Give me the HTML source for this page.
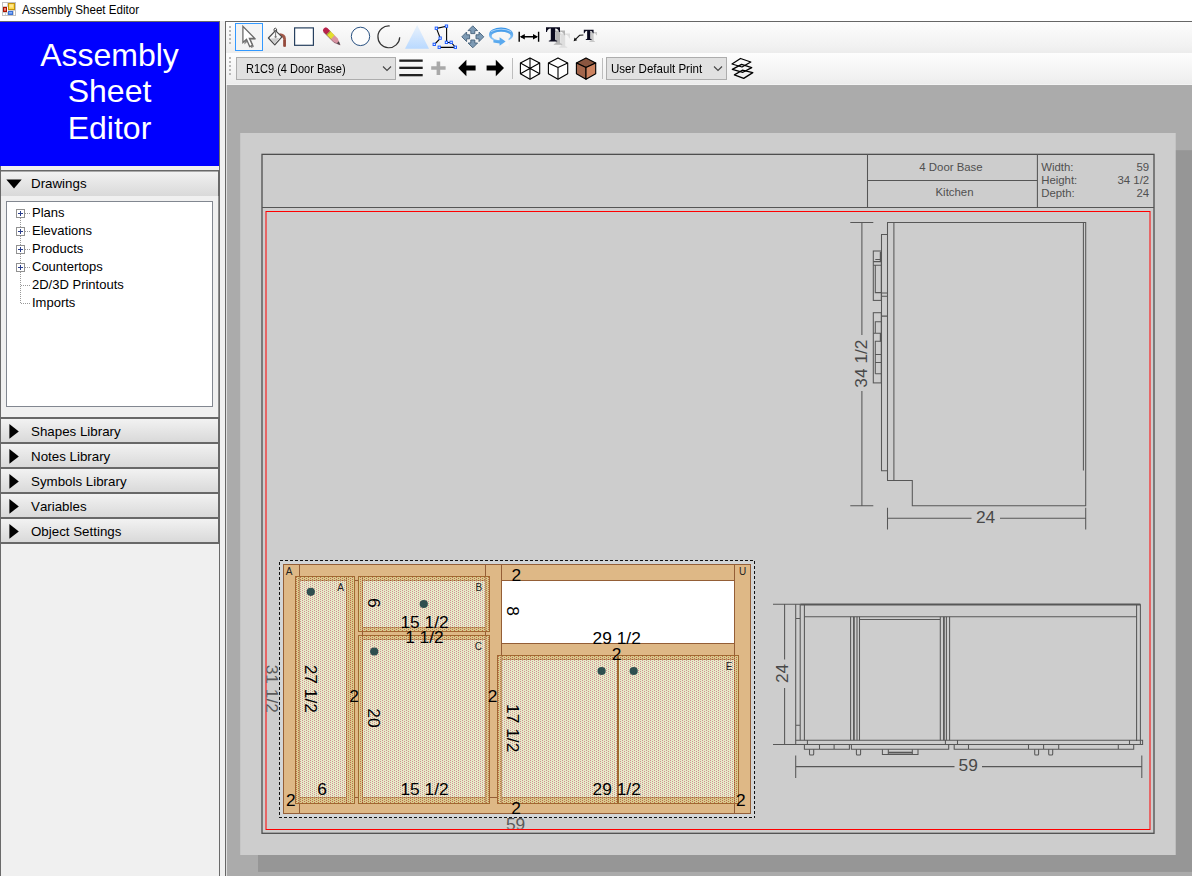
<!DOCTYPE html>
<html>
<head>
<meta charset="utf-8">
<title>Assembly Sheet Editor</title>
<style>
*{box-sizing:border-box;margin:0;padding:0}
html,body{width:1192px;height:876px;overflow:hidden;background:#fff;font-family:"Liberation Sans",sans-serif;}
.abs{position:absolute}
#title{position:absolute;left:0;top:0;width:1192px;height:21px;background:#fff}
#title span{position:absolute;left:22px;top:2px;font-size:12.2px;color:#000;white-space:nowrap;transform:translateY(0.6px) scaleX(0.949);transform-origin:0 50%}
#left{position:absolute;left:0;top:21px;width:220px;height:855px;background:#f0f0f0;border-left:1px solid #6a6a6a;border-right:1px solid #6a6a6a;border-top:1px solid #6a6a6a}
#blue{position:absolute;left:0;top:22px;width:219px;height:144px;background:#0000ff;color:#fff;text-align:center;font-size:32px;line-height:36.3px;padding-top:15px}
.hdr{position:absolute;left:0;width:220px;height:27px;border:2px solid #686868;border-left-width:1px;background:linear-gradient(#f2f2f2,#d9d9d9);font-size:13.33px;color:#000}
.hdr span{position:absolute;left:30px;top:4px;white-space:nowrap;font-kerning:none;transform:translateY(0.7px)}
.hdr svg{position:absolute;left:0;top:0}
#tree{position:absolute;left:6px;top:201px;width:207px;height:206px;background:#fff;border:1px solid #828790;font-size:13px;color:#000}
#tree div{position:absolute;left:25px;white-space:nowrap;height:18px;line-height:18px;font-kerning:none}
#split{position:absolute;left:220px;top:21px;width:5px;height:855px;background:#f0f0f0}
#main{position:absolute;left:225px;top:21px;width:967px;height:855px;background:#ababab;border-left:1px solid #666;border-top:1px solid #666}
#tb1{position:absolute;left:226px;top:22px;width:966px;height:31px;background:linear-gradient(#fdfdfd,#f1f1f1 80%,#ececec)}
#tb2{position:absolute;left:226px;top:53px;width:966px;height:32px;background:linear-gradient(#fdfdfd,#f1f1f1 80%,#ececec);border-bottom:1px solid #f3f3f3}
.combo{position:absolute;top:57px;height:23px;background:#e1e1e1;border:1px solid #adadad;font-size:11px;color:#000;line-height:22.6px;white-space:nowrap}
</style>
</head>
<body>
<div id="title"><span>Assembly Sheet Editor</span>
<svg class="abs" style="left:0;top:0" width="20" height="20" viewBox="0 0 20 20">
<rect x="2.5" y="2.5" width="13" height="13" fill="#fff" stroke="#c2c2c2"/>
<path d="M3 6.5 H8 M7.5 3 V7 M3 12.5 H8 M5.5 12 V15 M7.5 12 V15 M13.5 10 V15 M8 10.5 H15" stroke="#d0d0d0" fill="none"/>
<rect x="8.5" y="3.5" width="6" height="6" fill="#ffd84a" stroke="#c4940c"/>
<rect x="9.5" y="4.5" width="3.5" height="3" fill="#ffeea0" opacity="0.8"/>
<rect x="3.5" y="7.5" width="3" height="4" fill="#e04838" stroke="#a81400"/>
<rect x="4.3" y="8.2" width="1.4" height="2.2" fill="#f6a0a0"/>
<rect x="8" y="11" width="5" height="4" fill="#3c72d4"/>
<rect x="9" y="12" width="3" height="1.6" fill="#86b2ff"/>
</svg>
</div>

<div id="left"></div>
<div id="blue">Assembly<br>Sheet<br>Editor</div>

<div class="hdr" style="top:170px;height:26px;border-top-width:1px;border-bottom:0;box-shadow:inset 0 1px 0 #a9a9a9"><svg width="30" height="25"><path d="M5.3 8.5 L20.7 8.5 L13 17.6 Z" fill="#000"/></svg><span style="top:4px">Drawings</span></div>
<div id="tree">
<svg class="abs" style="left:0;top:0" width="30" height="120">
<g stroke="#999" stroke-width="1" stroke-dasharray="1 1" fill="none">
<path d="M13.5 16 V101"/><path d="M18 11.5 H24"/><path d="M18 29.5 H24"/><path d="M18 47.5 H24"/><path d="M18 65.5 H24"/><path d="M14 83.5 H24"/><path d="M14 101.5 H24"/>
</g>
<g fill="#fff" stroke="#919191"><rect x="9.5" y="7.5" width="8" height="8"/><rect x="9.5" y="25.5" width="8" height="8"/><rect x="9.5" y="43.5" width="8" height="8"/><rect x="9.5" y="61.5" width="8" height="8"/></g>
<g stroke="#2a3e8c" stroke-width="1"><path d="M11 11.5 H16 M13.5 9 V14"/><path d="M11 29.5 H16 M13.5 27 V32"/><path d="M11 47.5 H16 M13.5 45 V50"/><path d="M11 65.5 H16 M13.5 63 V68"/></g>
</svg>
<div style="top:2px">Plans</div>
<div style="top:20px">Elevations</div>
<div style="top:38px">Products</div>
<div style="top:56px">Countertops</div>
<div style="top:74px">2D/3D Printouts</div>
<div style="top:92px">Imports</div>
</div>

<div class="hdr" style="top:417px"><svg width="30" height="23"><path d="M8.4 5.1 L17.8 12.4 L8.4 19.7 Z" fill="#000"/></svg><span>Shapes Library</span></div>
<div class="hdr" style="top:442px"><svg width="30" height="23"><path d="M8.4 5.1 L17.8 12.4 L8.4 19.7 Z" fill="#000"/></svg><span>Notes Library</span></div>
<div class="hdr" style="top:467px"><svg width="30" height="23"><path d="M8.4 5.1 L17.8 12.4 L8.4 19.7 Z" fill="#000"/></svg><span>Symbols Library</span></div>
<div class="hdr" style="top:492px"><svg width="30" height="23"><path d="M8.4 5.1 L17.8 12.4 L8.4 19.7 Z" fill="#000"/></svg><span>Variables</span></div>
<div class="hdr" style="top:517px"><svg width="30" height="23"><path d="M8.4 5.1 L17.8 12.4 L8.4 19.7 Z" fill="#000"/></svg><span>Object Settings</span></div>

<div class="abs" style="left:218px;top:196px;width:1px;height:221px;background:#8e8e8e"></div>
<div id="split"></div>
<div id="main"></div>
<div id="tb1"></div>
<div id="tb2"></div>
<div class="abs" style="left:226px;top:85px;width:1px;height:791px;background:#dedede"></div>

<div class="combo" style="left:236px;width:160px"><span style="position:absolute;left:9px;font-size:12.6px;transform:scaleX(0.873);transform-origin:0 50%">R1C9 (4 Door Base)</span>
<svg class="abs" style="right:3px;top:7px" width="10" height="7"><path d="M1 1.5 L5 5.5 L9 1.5" fill="none" stroke="#444" stroke-width="1.1"/></svg></div>
<div class="combo" style="left:606px;width:121px"><span style="position:absolute;left:4px;font-size:12.6px;transform:scaleX(0.917);transform-origin:0 50%">User Default Print</span>
<svg class="abs" style="right:3px;top:7px" width="10" height="7"><path d="M1 1.5 L5 5.5 L9 1.5" fill="none" stroke="#444" stroke-width="1.1"/></svg></div>

<svg class="abs" style="left:0;top:0" width="1192" height="90" viewBox="0 0 1192 90" font-family="Liberation Serif, serif">
<defs>
<linearGradient id="triG" x1="0" y1="0" x2="0" y2="1"><stop offset="0" stop-color="#e9f2fc"/><stop offset="1" stop-color="#b9d9ff"/></linearGradient>
<linearGradient id="rotG" x1="0" y1="0" x2="0" y2="1"><stop offset="0" stop-color="#2f8fe6"/><stop offset="1" stop-color="#9fd0fa"/></linearGradient>
<filter id="blur1" x="-30%" y="-30%" width="160%" height="160%"><feGaussianBlur stdDeviation="0.7"/></filter>
</defs>
<!-- grips -->
<g fill="#b9b9b9">
<rect x="229" y="26" width="2" height="2"/><rect x="229" y="30" width="2" height="2"/><rect x="229" y="34" width="2" height="2"/><rect x="229" y="38" width="2" height="2"/><rect x="229" y="42" width="2" height="2"/>
<rect x="229" y="57" width="2" height="2"/><rect x="229" y="61" width="2" height="2"/><rect x="229" y="65" width="2" height="2"/><rect x="229" y="69" width="2" height="2"/><rect x="229" y="73" width="2" height="2"/>
</g>
<!-- selected button -->
<rect x="235.5" y="23.5" width="27" height="27" fill="#f4f4f4" stroke="#3399ff" stroke-width="1"/>
<!-- cursor -->
<path d="M244.4 28.2 L244.4 44.4 L248.2 41 L251.2 48 L254 46.8 L251 39.8 L256 39.8 Z" fill="#333" opacity="0.55" filter="url(#blur1)"/>
<path d="M242.9 26.4 L242.9 42.6 L246.5 39.3 L249.7 46.6 L252.5 45.3 L249.4 38.3 L254.6 38.3 Z" fill="#fff" stroke="#6c6c6c" stroke-width="1.3" stroke-linejoin="miter"/>
<!-- paint bucket -->
<g>
<path d="M279.6 33.2 Q285.6 33.4 285.9 38.6 L285.9 46.2 Q284.6 47.4 283.3 46.2 L283.3 39.6 Q283 36.4 279 36 Z" fill="#a05848"/>
<path d="M283.3 40 L283.3 46.2 Q284.6 47.4 285.9 46.2 L285.9 40 Z" fill="#8e4438" opacity="0.7"/>
<path d="M275.5 30.6 L281.9 36.9 L274.8 44.9 L268.4 38 Z" fill="#f7f7f7" stroke="#4a4a4a" stroke-width="1.2" stroke-linejoin="round"/>
<path d="M270.3 38.6 L274.8 43.4 L279.6 38 Z" fill="#cdcdcd"/>
<path d="M274.3 31.6 Q273.2 28.4 275.2 28.1 Q277.2 28.1 276.6 31.6" fill="none" stroke="#4a4a4a" stroke-width="1"/>
<path d="M275.6 31.6 V36.6" stroke="#777" stroke-width="1"/><circle cx="275.6" cy="36.8" r="1.1" fill="#777"/>
</g>
<!-- rectangle -->
<rect x="294.6" y="27.9" width="18.8" height="17.4" fill="#fff" stroke="#27405f" stroke-width="1.2"/>
<!-- pencil -->
<g transform="translate(326 30.6) rotate(45)">
<path d="M-0.5 -2.7 H14 L20.2 0 L14 2.7 H-0.5 Q-3 2.7 -3 0 Q-3 -2.7 -0.5 -2.7 Z" fill="#d994a2"/>
<path d="M-0.5 -2.7 H3.2 V2.7 H-0.5 Q-3 2.7 -3 0 Q-3 -2.7 -0.5 -2.7 Z" fill="#b8234a"/>
<rect x="3.2" y="-2.7" width="6.2" height="5.4" fill="#e2df2e"/>
<rect x="3.2" y="-2.7" width="1" height="5.4" fill="#6c8a3a" opacity="0.6"/>
<path d="M16.6 -1.55 L20.2 0 L16.6 1.55 Z" fill="#444"/>
<path d="M-0.5 2.7 H14 L20.2 0" fill="none" stroke="#7a5060" stroke-width="0.8" opacity="0.7"/>
</g>
<!-- circle -->
<circle cx="360.5" cy="36.4" r="9.2" fill="#fdfdfd" stroke="#2a5282" stroke-width="1"/>
<!-- arc -->
<path d="M389.8 26 A10.9 10.9 0 1 0 399.7 37.2" fill="none" stroke="#333" stroke-width="1.2"/>
<!-- triangle -->
<path d="M417.2 25 L429 48.8 L405 48.8 Z" fill="url(#triG)"/>
<!-- polygon -->
<g fill="none" stroke="#000" stroke-width="1.1">
<path d="M434.4 44.5 L440.3 38.3 L436.5 28.4 L446.6 26.3 L446.6 42.5 L451.3 42.5 L455.5 47.4 L439.4 47.4"/>
</g>
<g fill="#fff" stroke="#1f5cff" stroke-width="1">
<rect x="433.1" y="43.2" width="2.3" height="2.3"/><rect x="439" y="37" width="2.3" height="2.3"/><rect x="435.2" y="27.1" width="2.3" height="2.3"/><rect x="445.3" y="25" width="2.3" height="2.3"/><rect x="445.3" y="41.2" width="2.3" height="2.3"/><rect x="450" y="41.2" width="2.3" height="2.3"/><rect x="454.2" y="46.1" width="2.3" height="2.3"/><rect x="438.1" y="46.1" width="2.3" height="2.3"/>
</g>
<!-- move -->
<g fill="#7e9bb5" stroke="#46627c" stroke-width="0.9" stroke-linejoin="round">
<path d="M472.8 25.8 L477.6 30.6 L474.8 30.6 L474.8 33.6 L470.8 33.6 L470.8 30.6 L468 30.6 Z"/>
<path d="M472.8 47.8 L477.6 43 L474.8 43 L474.8 40 L470.8 40 L470.8 43 L468 43 Z"/>
<path d="M461.8 36.8 L466.6 32 L466.6 34.8 L469.6 34.8 L469.6 38.8 L466.6 38.8 L466.6 41.6 Z"/>
<path d="M483.8 36.8 L479 32 L479 34.8 L476 34.8 L476 38.8 L479 38.8 L479 41.6 Z"/>
</g>
<!-- rotate -->
<g>
<path fill-rule="evenodd" d="M489 34.7 A12.1 7.2 0 1 1 513.2 34.7 A12.1 7.2 0 1 1 489 34.7 Z M491.6 36 A9.5 4.2 0 1 0 510.6 36 A9.5 4.2 0 1 0 491.6 36 Z" fill="url(#rotG)"/>
<path d="M491 31.5 Q501 26.8 511.2 31.5" fill="none" stroke="#cfe8fc" stroke-width="0.8" opacity="0.9"/>
<path d="M503.5 38 H508.5 V46 H503.5 Z" fill="#f6f6f6"/>
<path d="M499.6 37.2 L505.6 41.4 L499.6 45.8 L499.6 43.4 L493.4 42.4 L493.4 40 L499.6 40.4 Z" fill="#5aa9ee"/>
</g>
<!-- dimension -->
<g stroke="#000" stroke-width="1.4" fill="#000">
<path d="M519.2 31.8 V41.8 M538.6 31.8 V41.8 M521 36.8 H537" fill="none"/>
<path d="M519.8 36.8 L524.8 34 L524.8 39.6 Z M538 36.8 L533 34 L533 39.6 Z" stroke="none"/>
</g>
<!-- T -->
<path transform="translate(556 33.4)" d="M0 0 H14 V4.8 H13 Q12.6 1.6 9.2 1.4 V12.4 Q9.2 13.5 11.2 13.6 V14.4 H2.8 V13.6 Q4.8 13.5 4.8 12.4 V1.4 Q1.4 1.6 1 4.8 H0 Z" fill="#dedede"/>
<path transform="translate(551 30.4)" d="M0 0 H14 V4.8 H13 Q12.6 1.6 9.2 1.4 V12.4 Q9.2 13.5 11.2 13.6 V14.4 H2.8 V13.6 Q4.8 13.5 4.8 12.4 V1.4 Q1.4 1.6 1 4.8 H0 Z" fill="#b4b4b4"/>
<path transform="translate(546 27.2)" d="M0 0 H14 V4.8 H13 Q12.6 1.6 9.2 1.4 V12.4 Q9.2 13.5 11.2 13.6 V14.4 H2.8 V13.6 Q4.8 13.5 4.8 12.4 V1.4 Q1.4 1.6 1 4.8 H0 Z" fill="#0a0a1e"/>
<path transform="translate(587.2 31.9) scale(0.7)" d="M0 0 H14 V4.8 H13 Q12.6 1.6 9.2 1.4 V12.4 Q9.2 13.5 11.2 13.6 V14.4 H2.8 V13.6 Q4.8 13.5 4.8 12.4 V1.4 Q1.4 1.6 1 4.8 H0 Z" fill="#c8c8c8"/>
<path transform="translate(583.8 29.8) scale(0.7)" d="M0 0 H14 V4.8 H13 Q12.6 1.6 9.2 1.4 V12.4 Q9.2 13.5 11.2 13.6 V14.4 H2.8 V13.6 Q4.8 13.5 4.8 12.4 V1.4 Q1.4 1.6 1 4.8 H0 Z" fill="#0a0a1e"/>
<path d="M583.4 35 L579.6 35.3 L575.2 39.6" fill="none" stroke="#111" stroke-width="1.1"/>
<path d="M573.6 41.2 L574.6 37.6 L577.2 40.2 Z" fill="#111"/>
<!-- toolbar 2 -->
<g fill="#222"><rect x="399.3" y="59.5" width="23.4" height="2.3"/><rect x="399.3" y="66.7" width="23.4" height="2.3"/><rect x="399.3" y="74" width="23.4" height="2.3"/></g>
<path d="M436.6 61.4 H440.2 V66.2 H445.6 V69.8 H440.2 V75 H436.6 V69.8 H431.2 V66.2 H436.6 Z" fill="#a9a9a9"/>
<path d="M458.2 68 L466.4 59.8 L466.4 65.4 L475.6 65.4 L475.6 70.6 L466.4 70.6 L466.4 76.2 Z" fill="#000"/>
<path d="M504 68 L495.8 59.8 L495.8 65.4 L486.6 65.4 L486.6 70.6 L495.8 70.6 L495.8 76.2 Z" fill="#000"/>
<path d="M512.5 58 V79 M602.5 58 V79" stroke="#bdbdbd" stroke-width="1"/>
<!-- cubes -->
<g fill="none" stroke="#000" stroke-width="1.1" stroke-linejoin="round">
<path d="M530 57.9 L539.7 63.1 L539.7 73.8 L530 79.2 L520.4 73.8 L520.4 63.1 Z" fill="#fff"/>
<path d="M530 57.9 V79.2 M520.4 63.1 L539.7 73.8 M539.7 63.1 L520.4 73.8"/>
<path d="M558 57.9 L567.7 63.1 L567.7 73.8 L558 79.2 L548.4 73.8 L548.4 63.1 Z" fill="#fff"/>
<path d="M548.4 63.1 L558 67.6 L567.7 63.1 M558 67.6 V79.2"/>
<path d="M586 57.9 L595.7 63.1 L586 67.6 L576.4 63.1 Z" fill="#8a5640"/>
<path d="M576.4 63.1 L586 67.6 L586 79.2 L576.4 73.8 Z" fill="#a3664c"/>
<path d="M595.7 63.1 L586 67.6 L586 79.2 L595.7 73.8 Z" fill="#cd8461"/>
</g>
<!-- layers -->
<g fill="none" stroke="#000" stroke-width="1.3" stroke-linejoin="round">
<path d="M734.4 74.9 L742.3 70.2 L752.8 72.6 L743.7 78.4 Z"/>
<path d="M732.3 69.3 L741.6 64.4 L751.7 67.6 L742.9 72.3 Z"/>
<path d="M732 64 L740.5 58.5 L750.8 62 L742 67 Z"/>
</g>
</svg>


<svg class="abs" style="left:0;top:0" width="1192" height="876" viewBox="0 0 1192 876" font-family="Liberation Sans, sans-serif">
<defs>
<pattern id="dotL" x="0" y="0" width="4" height="2" patternUnits="userSpaceOnUse"><rect width="4" height="2" fill="#e6ecc8"/><rect x="0" y="1" width="1" height="1" fill="#d28c94"/><rect x="2" y="0" width="1" height="1" fill="#d28c94"/></pattern>
<pattern id="dotD" x="0" y="0" width="4" height="2" patternUnits="userSpaceOnUse"><rect width="4" height="2" fill="#d8cc8c"/><rect x="0" y="1" width="1" height="1" fill="#c06850"/><rect x="2" y="0" width="1" height="1" fill="#c06850"/></pattern>
<pattern id="dotsOnly" x="0" y="0" width="4" height="2" patternUnits="userSpaceOnUse"><rect x="0" y="1" width="1" height="1" fill="#b04430"/><rect x="2" y="0" width="1" height="1" fill="#b04430"/></pattern>
<clipPath id="redclip"><rect x="266.3" y="211.8" width="883.2" height="617"/></clipPath>
</defs>
<!-- shadow + sheet -->
<rect x="258" y="150.2" width="936" height="721.7" fill="#969696"/>
<rect x="240.2" y="133" width="935.5" height="722" fill="#cdcdcd"/>
<!-- frame -->
<g fill="none" stroke="#4e4e4e" stroke-width="1.3">
<rect x="262" y="154.35" width="892" height="678.95"/>
<path d="M262 207.5 H1154 M867.5 154 V207.5 M1037.4 154 V207.5" stroke="#555" stroke-width="1.05"/>
<path d="M867.5 180.5 H1037.3" stroke="#555" stroke-width="1.05"/>
</g>
<rect x="266" y="211.5" width="884" height="618" fill="none" stroke="#ff0000" stroke-width="1"/>
<g font-size="11.4" fill="#505050">
<text x="951" y="170.9" text-anchor="middle">4 Door Base</text>
<text x="954.5" y="196.3" text-anchor="middle">Kitchen</text>
<text x="1041.2" y="170.9">Width:</text><text x="1041.2" y="184.3">Height:</text><text x="1041.2" y="197.2">Depth:</text>
<text x="1149.2" y="170.9" text-anchor="end">59</text><text x="1149.2" y="184.3" text-anchor="end">34 1/2</text><text x="1149.2" y="197.2" text-anchor="end">24</text>
</g>
<g id="side" fill="none" stroke="#575757" stroke-width="1.05">
<path d="M850.3 222.4 H873.3 M850.3 505.8 H873.3 M861.9 222.4 V335 M861.9 391 V505.8"/>
<path d="M887.5 222.4 H1085.7 V505.8 H912.3 V480.5 H887.5 Z"/>
<path d="M893.9 222.4 V480.5 M1083.4 222.4 V470.5"/>
<path d="M887.5 234.4 H881.5 V470.7 H887.5 M881.5 293 H887.5 M881.5 296.3 H887.5 M881.5 316.1 H887.5"/>
<rect x="873.3" y="251" width="8" height="49.4"/>
<path d="M875.3 259.5 H881.3 M873.3 261.6 H881.3 M873.3 265.2 H881.3 M875.3 265.2 V292.6 H881.3"/>
<path d="M880.6 252 V262" stroke-width="1.6"/>
<rect x="873.3" y="312.7" width="8" height="70.2"/>
<path d="M875.3 333.2 V321.8 H881.3 M873.3 333.2 H881.3 M875.3 373.8 V341.2 H881.3 M875.3 354.4 H881.3 M875.3 362.4 H881.3 M875.3 373.8 H881.3"/>
<path d="M880.6 333 V341.5" stroke-width="1.6"/>
<path d="M887.5 507.7 V529.5 M1085.7 507.7 V529.5 M887.5 518.2 H971.5 M1000 518.2 H1085.7"/>
</g>
<g font-size="17.33" fill="#484848" text-anchor="middle">
<text transform="translate(860.4 363.6) rotate(-90)" y="6.1">34 1/2</text>
<text x="985.6" y="523">24</text>
</g>

<g id="plan" fill="none" stroke="#575757" stroke-width="1.05">
<path d="M773 604.3 H800 M773 744.5 H796 M784.6 604.3 V659.5 M784.6 688 V744.5"/>
<path d="M800.2 604.5 H1140.4" stroke-width="1.8"/>
<path d="M795.7 604.3 V744.5 M800.2 604.3 V740.3 M804.4 604.3 V740.3 M795.7 618.5 H800.2 M795.7 725.2 H800.2"/>
<path d="M804.4 616.8 H1136.6"/>
<path d="M850.6 616.8 V740.3 M857 616.8 V740.3 M859.5 616.8 V740.3 M940.3 616.8 V740.3 M946.4 616.8 V740.3 M949.6 616.8 V740.3 M859.5 619.4 H940.3"/>
<path d="M853.9 616.8 V740.3 M943.9 616.8 V740.3" stroke-width="1.7"/>
<path d="M1136.6 604.3 V741 M1140.4 604.3 V744.5"/>
<path d="M795.7 740.3 H1142.6 V744.5 H795.7 M807.4 740.3 V744.5 M957.5 740.3 V744.5 M1129.5 740.3 V744.5 M945.4 740.3 V744.5"/>
<path d="M804.4 744.5 V749.2 H849.4 V744.5 M819.5 744.5 V749.2 M834.1 744.5 V749.2"/>
<path d="M851.4 744.5 V749.2 H948.7 V744.5"/>
<path d="M954.2 744.5 V749.2 H1133.7 V744.5 M968.5 744.5 V749.2 M1028.5 744.5 V749.2 M1043.6 744.5 V749.2 M1058.7 744.5 V749.2 M1118.3 744.5 V749.2"/>
<path d="M809.5 749.2 V754 Q809.5 755 810.5 755 H812.7 Q813.7 755 813.7 754 V749.2"/>
<path d="M856.4 749.2 V754 Q856.4 755 857.4 755 H859.6 Q860.6 755 860.6 754 V749.2"/>
<path d="M1034.7 749.2 V754 Q1034.7 755 1035.7 755 H1037.6 Q1038.6 755 1038.6 754 V749.2"/>
<path d="M1048.7 749.2 V754 Q1048.7 755 1049.7 755 H1051.7 Q1052.7 755 1052.7 754 V749.2"/>
<path d="M882.4 749.2 V754.5 H918 V749.2 M888.3 749.2 V754.5 M912.3 749.2 V754.5"/>
<path d="M888.3 752.6 H912.3" stroke-width="1.8"/>
<path d="M795.7 755.4 V778 M1141.8 755.4 V778 M795.7 766.6 H954.5 M982 766.6 H1141.8"/>
</g>
<g font-size="17.33" fill="#484848" text-anchor="middle">
<text transform="translate(782.3 673.4) rotate(-90)" y="6.1">24</text>
<text x="968.2" y="770.6">59</text>
</g>

<g id="front">
<!-- gray dimension text (clipped by red frame) -->
<g clip-path="url(#redclip)" font-size="17.33" fill="#5a5a5a" text-anchor="middle">
<text transform="translate(272.3 688.8) rotate(90)" y="6.1">31 1/2</text>
<text x="515.6" y="830.4">59</text>
</g>
<g shape-rendering="crispEdges">
<!-- selection box -->
<rect x="279.5" y="560.5" width="475" height="257" fill="#d3d5d6" stroke="#111" stroke-width="1" stroke-dasharray="3 2"/>
<!-- face frame -->
<rect x="283.5" y="564.5" width="467" height="249" fill="#deb886" stroke="#945e36" stroke-width="1"/>
<!-- openings -->
<g fill="#fff" stroke="#945e36" stroke-width="1">
<rect x="299.5" y="580.5" width="47" height="217"/>
<rect x="362.5" y="580.5" width="123" height="47"/>
<rect x="362.5" y="639.5" width="123" height="158"/>
<rect x="501.5" y="580.5" width="233" height="63"/>
<rect x="501.5" y="659.5" width="233" height="138"/>
</g>
<!-- frame joints -->
<g fill="none" stroke="#945e36" stroke-width="1">
<path d="M299.5 564.5 V813.5 M485.5 564.5 V797.5 M501.5 564.5 V797.5 M734.5 564.5 V813.5 M346.5 580.5 V797.5 M362.5 580.5 V797.5 M299.5 797.5 H734.5 M299.5 580.5 H485.5 M501.5 580.5 H734.5"/>
</g>
<!-- doors: overlay band + opening fill -->
<g stroke="none">
<rect x="296" y="577" width="58" height="226" fill="url(#dotD)"/>
<rect x="300" y="581" width="46" height="216" fill="url(#dotL)"/>
<rect x="359" y="577" width="130" height="54" fill="url(#dotD)"/>
<rect x="363" y="581" width="122" height="46" fill="url(#dotL)"/>
<rect x="359" y="636" width="130" height="167" fill="url(#dotD)"/>
<rect x="363" y="640" width="122" height="157" fill="url(#dotL)"/>
<rect x="498" y="656" width="240" height="147" fill="url(#dotD)"/>
<rect x="502" y="660" width="232" height="137" fill="url(#dotL)"/>
</g>
<!-- opening edges seen through doors -->
<g fill="none" stroke="#b89c66" stroke-width="1">
<rect x="299.5" y="580.5" width="47" height="217"/>
<rect x="362.5" y="580.5" width="123" height="47"/>
<rect x="362.5" y="639.5" width="123" height="158"/>
<rect x="501.5" y="659.5" width="233" height="138"/>
<path d="M485.5 577 V631 M485.5 636 V803 M501.5 656 V803 M734.5 656 V803 M299.5 577 V580 M299.5 798 V803 M346.5 577 V580 M346.5 798 V803 M362.5 577 V580 M362.5 628 V631 M362.5 636 V639 M362.5 798 V803"/>
</g>
<!-- dots over through-lines -->
<g fill="none" stroke="url(#dotsOnly)" stroke-width="1">
<rect x="299.5" y="580.5" width="47" height="217"/>
<rect x="362.5" y="580.5" width="123" height="47"/>
<rect x="362.5" y="639.5" width="123" height="158"/>
<rect x="501.5" y="659.5" width="233" height="138"/>
<path d="M485.5 577 V631 M485.5 636 V803 M501.5 656 V803 M734.5 656 V803 M299.5 577 V580 M299.5 798 V803 M346.5 577 V580 M346.5 798 V803 M362.5 577 V580 M362.5 628 V631 M362.5 636 V639 M362.5 798 V803"/>
</g>
<!-- door outlines -->
<g fill="none" stroke="#a06830" stroke-width="1">
<rect x="295.5" y="576.5" width="59" height="227"/>
<rect x="358.5" y="576.5" width="131" height="55"/>
<rect x="358.5" y="635.5" width="131" height="168"/>
<rect x="497.5" y="655.5" width="241" height="148"/>
<path d="M618 655.5 V803.5" stroke-width="2"/>
</g>
</g>
<!-- hinge dots -->
<g fill="#2f4f4f"><circle cx="310.8" cy="591.8" r="4.1"/><circle cx="423.8" cy="604" r="4.1"/><circle cx="374.2" cy="651.5" r="4.1"/><circle cx="601.6" cy="671" r="4.1"/><circle cx="633.7" cy="671" r="4.1"/></g>
<!-- letter labels -->
<g font-size="10" fill="#222" text-anchor="middle">
<text x="289" y="574.7">A</text><text x="340.7" y="590.7">A</text><text x="478.9" y="590.7">B</text><text x="478.3" y="650">C</text><text x="729.1" y="670">E</text><text x="742.6" y="574.7">U</text>
</g>
<!-- dimension labels -->
<g font-size="17.33" fill="#000" text-anchor="middle">
<text x="516.2" y="580.5">2</text>
<text x="616.7" y="643.5">29 1/2</text>
<text x="616.6" y="659.8">2</text>
<text x="424.5" y="627.6">15 1/2</text>
<text x="424.4" y="642.6">1 1/2</text>
<text x="354.1" y="701.8">2</text>
<text x="492.5" y="701.8">2</text>
<text x="322" y="795.1">6</text>
<text x="290.8" y="805.5">2</text>
<text x="424.5" y="795.1">15 1/2</text>
<text x="616.7" y="795.1">29 1/2</text>
<text x="516" y="813.6">2</text>
<text x="740.9" y="806.1">2</text>
<text transform="translate(513.3 611) rotate(90)" y="6.1">8</text>
<text transform="translate(374.3 602.8) rotate(90)" y="6.1">6</text>
<text transform="translate(311.3 688.8) rotate(90)" y="6.1">27 1/2</text>
<text transform="translate(374.3 718) rotate(90)" y="6.1">20</text>
<text transform="translate(513.2 728.2) rotate(90)" y="6.1">17 1/2</text>
</g>
</g>
</svg>


</body>
</html>
